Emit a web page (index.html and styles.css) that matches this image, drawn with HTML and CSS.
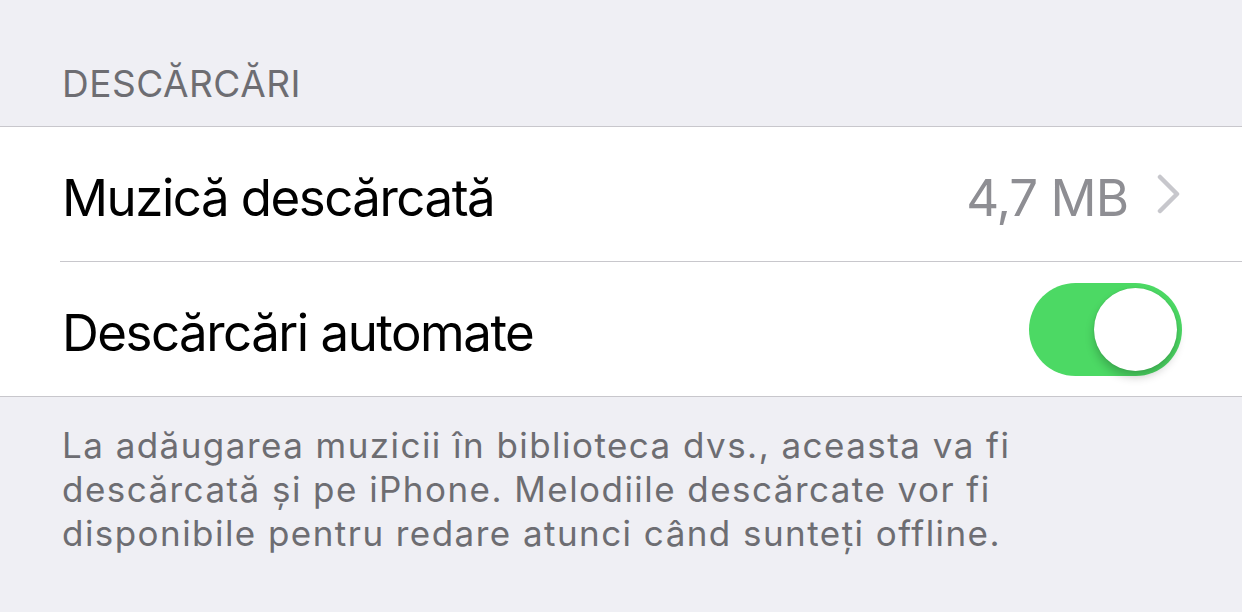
FILE: index.html
```html
<!DOCTYPE html>
<html>
<head>
    <title>Descărcări</title>
    <link rel="stylesheet" href="styles.css">
</head>
<body>
    <div class="settings">
        <div class="group-header">DESCĂRCĂRI</div>

        <div class="group">
            <div class="row">
                <span class="row-label">Muzică descărcată</span>
                <span class="row-detail">4,7 MB</span>
                <svg class="chevron" width="26" height="40" viewBox="0 0 26 40">
                    <path d="M4 3 L21 20 L4 37" fill="none" stroke="#c7c7cc" stroke-width="4.5" stroke-linecap="round" stroke-linejoin="round"/>
                </svg>
            </div>
            <div class="row">
                <span class="row-label">Descărcări automate</span>
                <div class="switch on">
                    <div class="knob"></div>
                </div>
            </div>
        </div>

        <div class="group-footer">
            La adăugarea muzicii în biblioteca dvs., aceasta va fi<br>
            descărcată și pe iPhone. Melodiile descărcate vor fi<br>
            disponibile pentru redare atunci când sunteți offline.
        </div>
    </div>
</body>
</html>
```

FILE: styles.css
```css
body {
    margin: 0;
    background-color: #efeff4;
    font-family: Inter, "Noto Sans", sans-serif;
}
.settings {
    width: 1242px;
}
.group-header {
    height: 127px;
    box-sizing: border-box;
    padding: 62px 0 0 62px;
    font-size: 37px;
    line-height: 44px;
    letter-spacing: 0.5px;
    color: #6d6d72;
    border-bottom: 1.5px solid #c8c7cc;
}
.group {
    background-color: #fff;
    border-bottom: 1.5px solid #c8c7cc;
}
.row {
    display: flex;
    align-items: center;
    height: 134px;
    margin-left: 60px;
    padding: 0 60px 0 2px;
    border-bottom: 1.5px solid #c8c7cc;
}
.row:last-child {
    border-bottom: none;
}
.row-label {
    flex: 1;
    font-size: 51px;
    line-height: 51px;
    padding-top: 6px;
    letter-spacing: -1.5px;
    color: #000;
}
.row-detail {
    font-size: 51px;
    line-height: 51px;
    padding-top: 6px;
    letter-spacing: -1px;
    color: #8e8e93;
    margin-right: 28px;
}
.chevron {
    display: block;
}
.switch {
    width: 153px;
    height: 93px;
    border-radius: 47px;
    background-color: #4cd964;
    position: relative;
}
.knob {
    position: absolute;
    top: 5px;
    right: 5px;
    width: 83px;
    height: 83px;
    border-radius: 50%;
    background-color: #fff;
    box-shadow: 0 6px 10px rgba(0, 0, 0, 0.22), 0 0 2px rgba(0, 0, 0, 0.1);
}
.group-footer {
    padding: 26px 0 0 62px;
    font-size: 35px;
    line-height: 44px;
    letter-spacing: 1.45px;
    color: #6d6d72;
}
```
